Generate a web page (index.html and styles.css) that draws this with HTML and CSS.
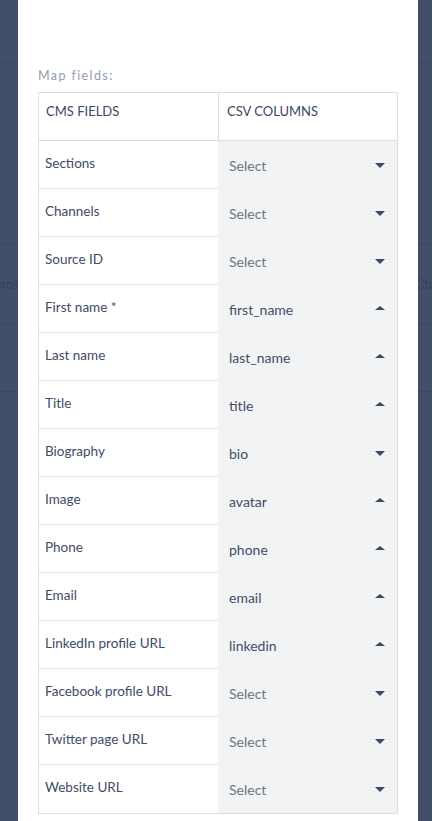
FILE: index.html
```html
<!DOCTYPE html>
<html lang="en">
<head>
<meta charset="utf-8">
<title>Map fields</title>
<link rel="stylesheet" href="styles.css">
</head>
<body>
<div class="page">
  <div class="strip strip-left">
    <div class="bg-row bg-r1"></div>
    <div class="bg-row bg-r2"></div>
    <div class="bg-row bg-r3"><span class="bg-text">Euros</span></div>
    <div class="bg-row bg-r4"></div>
    <div class="bg-row bg-r5"></div>
  </div>
  <div class="modal">
    <div class="label">Map fields:</div>
    <div class="map-table">
      <div class="head">
        <div class="hcell hcell-left">CMS FIELDS</div>
        <div class="hcell">CSV COLUMNS</div>
      </div>
      <div class="row"><div class="field">Sections</div><div class="col placeholder">Select<span class="caret down"></span></div></div>
      <div class="row"><div class="field">Channels</div><div class="col placeholder">Select<span class="caret down"></span></div></div>
      <div class="row"><div class="field">Source ID</div><div class="col placeholder">Select<span class="caret down"></span></div></div>
      <div class="row"><div class="field">First name *</div><div class="col">first_name<span class="caret up"></span></div></div>
      <div class="row"><div class="field">Last name</div><div class="col">last_name<span class="caret up"></span></div></div>
      <div class="row"><div class="field">Title</div><div class="col">title<span class="caret up"></span></div></div>
      <div class="row"><div class="field">Biography</div><div class="col">bio<span class="caret down"></span></div></div>
      <div class="row"><div class="field">Image</div><div class="col">avatar<span class="caret up"></span></div></div>
      <div class="row"><div class="field">Phone</div><div class="col">phone<span class="caret up"></span></div></div>
      <div class="row"><div class="field">Email</div><div class="col">email<span class="caret up"></span></div></div>
      <div class="row"><div class="field">LinkedIn profile URL</div><div class="col">linkedin<span class="caret up"></span></div></div>
      <div class="row"><div class="field">Facebook profile URL</div><div class="col placeholder">Select<span class="caret down"></span></div></div>
      <div class="row"><div class="field">Twitter page URL</div><div class="col placeholder">Select<span class="caret down"></span></div></div>
      <div class="row last"><div class="field">Website URL</div><div class="col placeholder">Select<span class="caret down"></span></div></div>
    </div>
  </div>
  <div class="strip strip-right">
    <div class="bg-row bg-r1"></div>
    <div class="bg-row bg-r2"></div>
    <div class="bg-row bg-r3"><span class="bg-text">3b5f</span></div>
    <div class="bg-row bg-r4"></div>
    <div class="bg-row bg-r5"></div>
  </div>
</div>
</body>
</html>
```
FILE: styles.css
```css
html, body {
  margin: 0;
  padding: 0;
  height: 821px;
  overflow: hidden;
}
body {
  background: #434f69;
  font-family: Lato, "Open Sans", "Liberation Sans", sans-serif;
}
.page {
  display: grid;
  grid-template-columns: 18px 400px 14px;
  height: 821px;
}
.strip {
  overflow: hidden;
  display: flex;
  flex-direction: column;
}
.bg-row {
  border-bottom: 1px solid #3c475f;
  box-sizing: border-box;
  display: flex;
  align-items: center;
  font-size: 13px;
  color: #36415a;
  white-space: nowrap;
  flex: none;
}
.strip-left .bg-row {
  justify-content: flex-end;
}
.strip-left .bg-text {
  margin-right: -1px;
}
.strip-right .bg-text {
  margin-left: -1px;
}
.bg-r1 { height: 63px; }
.bg-r2 { height: 182px; }
.bg-r3 { height: 79px; }
.bg-r4 { height: 68px; }
.bg-r5 { height: 60px; border-bottom: none; }
.modal {
  background: #ffffff;
  padding: 68px 20px 0 20px;
}
.label {
  font-size: 12.5px;
  line-height: 16px;
  letter-spacing: 1.4px;
  color: #939cad;
  margin-bottom: 8px;
}
.map-table {
  width: 360px;
  box-sizing: border-box;
  border: 1px solid #dcdfe4;
}
.head {
  display: flex;
  height: 48px;
  box-sizing: border-box;
  border-bottom: 1px solid #dcdfe4;
}
.hcell {
  flex: 1;
  font-size: 13px;
  line-height: 16px;
  color: #3b4764;
  padding: 10px 8px 0 8px;
}
.hcell-left {
  flex: 0 0 180px;
  box-sizing: border-box;
  border-right: 1px solid #dcdfe4;
  padding-left: 7px;
}
.row {
  display: flex;
  height: 48px;
}
.field {
  flex: 0 0 179px;
  box-sizing: border-box;
  border-bottom: 1px solid #e3e5e9;
  font-size: 13.5px;
  line-height: 16px;
  color: #3f4b67;
  padding: 14px 6px 0 6px;
}
.row.last .field {
  border-bottom: none;
}
.col {
  flex: 1;
  background: #f2f3f5;
  display: flex;
  align-items: center;
  justify-content: space-between;
  padding: 0 12px 0 11px;
  font-size: 14px;
  color: #434e68;
}
.col.placeholder {
  color: #6d7587;
}
.caret {
  width: 0;
  height: 0;
  border-left: 5px solid transparent;
  border-right: 5px solid transparent;
}
.caret.down {
  border-top: 5px solid #3b4764;
}
.caret.up {
  border-bottom: 4px solid #3b4764;
  margin-top: -2px;
}
```
